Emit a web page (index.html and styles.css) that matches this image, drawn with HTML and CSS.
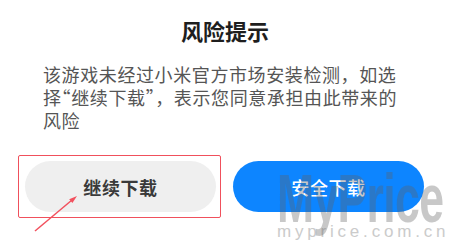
FILE: index.html
```html
<!DOCTYPE html>
<html lang="zh">
<head>
<meta charset="utf-8">
<link rel="stylesheet" href="styles.css">
</head>
<body>
<div class="dialog">
  <h1 class="title">风险提示</h1>
  <p class="message">该游戏未经过小米官方市场安装检测，如选择<span class="q">“</span>继续下载<span class="q">”</span>，表示您同意承担由此带来的风险</p>
  <div class="actions">
    <button class="btn btn-secondary">继续下载</button>
    <button class="btn btn-primary">安全下载</button>
  </div>
</div>
<div class="highlight"></div>
<svg class="arrow" width="60" height="50" viewBox="0 0 60 50">
  <line x1="5" y1="41" x2="42" y2="10" stroke="#f2515e" stroke-width="1.5"/>
  <polygon points="47,6 42.4,13 39.2,9.2" fill="#f2515e"/>
</svg>
<div class="watermark">
  <div class="wm-big">MyPrice</div>
  <div class="wm-small">myprice.com.cn</div>
</div>
</body>
</html>
```

FILE: styles.css
```css
html, body {
  margin: 0;
  padding: 0;
  background: #ffffff;
  width: 450px;
  height: 241px;
  overflow: hidden;
  position: relative;
  font-family: "Noto Sans CJK SC", "Noto Sans", sans-serif;
}
.dialog {
  display: flex;
  flex-direction: column;
  padding: 0 25px;
}
.title {
  margin: 15px 0 0 0;
  font-size: 22px;
  line-height: 30px;
  font-weight: 700;
  color: #1e1e1e;
  text-align: center;
}
.message {
  margin: 18px 0 0 18px;
  width: 362px;
  font-size: 18px;
  line-height: 23px;
  color: #555555;
  letter-spacing: 0.6px;
}
.q {
  font-feature-settings: "halt";
}
.actions {
  display: flex;
  gap: 17px;
  margin-top: 29px;
}
.btn {
  width: 191px;
  height: 51px;
  border: none;
  border-radius: 26px;
  font-family: "Noto Sans CJK SC", sans-serif;
  font-size: 18px;
  letter-spacing: 0.6px;
  padding: 0;
}
.btn-secondary {
  background: #efefef;
  color: #3a3a3a;
  font-weight: 700;
}
.btn-primary {
  background: #0d85ff;
  color: #ffffff;
  font-weight: 500;
}
.highlight {
  position: absolute;
  left: 18px;
  top: 155px;
  width: 201px;
  height: 61px;
  border: 1.5px solid #f0505c;
  border-radius: 2px;
}
.arrow {
  position: absolute;
  left: 30px;
  top: 190px;
}
.watermark {
  position: absolute;
  left: 277px;
  top: 164px;
  width: 173px;
  overflow: hidden;
  pointer-events: none;
}
.wm-big {
  font-family: "Liberation Sans", Arial, sans-serif;
  font-weight: 700;
  font-size: 68px;
  line-height: 68px;
  height: 68px;
  letter-spacing: -1px;
  color: rgba(96, 96, 96, 0.35);
  transform: scaleX(0.655);
  transform-origin: left top;
  white-space: nowrap;
}
.wm-small {
  font-family: "Liberation Sans", Arial, sans-serif;
  font-size: 17px;
  line-height: 17px;
  letter-spacing: 3.8px;
  color: #cbcbcb;
  margin-top: -9px;
  white-space: nowrap;
}
```
